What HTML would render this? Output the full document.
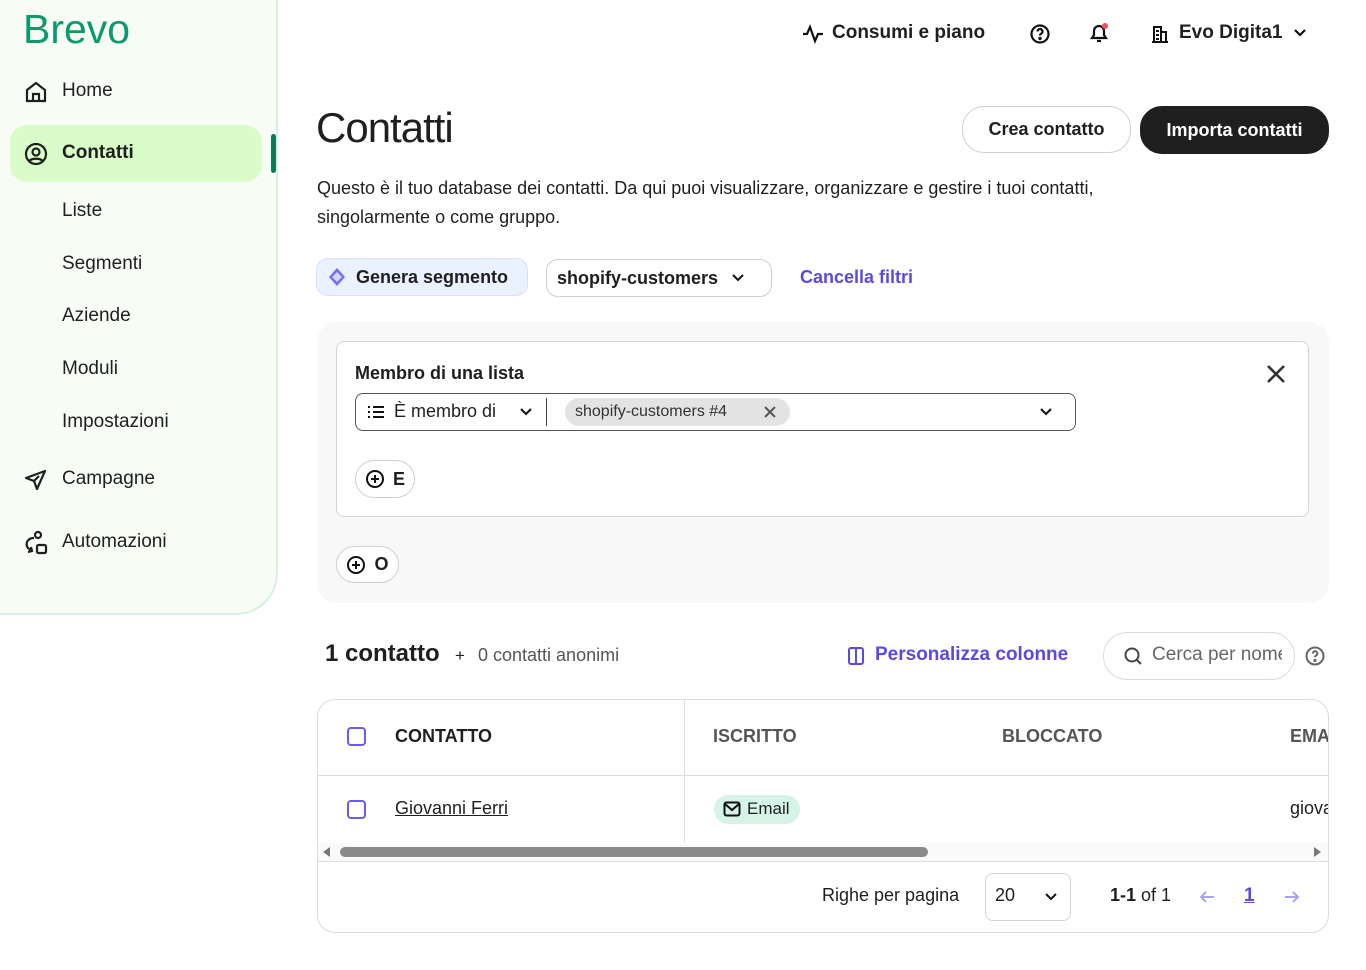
<!DOCTYPE html>
<html><head><meta charset="utf-8"><style>
*{box-sizing:border-box;margin:0;padding:0}
body{width:1366px;height:970px;background:#fff;font-family:"Liberation Sans",sans-serif;color:#1f1f1f;position:relative;overflow:hidden}
.a{position:absolute;white-space:nowrap}
.side{position:absolute;left:0;top:-2px;width:278px;height:617px;background:#f7fdf5;border-right:2px solid #d8efe6;border-bottom:2px solid #d8efe6;border-bottom-right-radius:42px}
.nav{font-size:19px;color:#1f1f1f}
svg{display:block}
.btn{position:absolute;border:1px solid #cfcfcf;border-radius:22px;background:#fff;display:flex;align-items:center;justify-content:center}
</style></head><body>
<div class="side"></div>
<div class="a" style="left:23px;top:6px;font-size:41px;color:#0b996e;letter-spacing:0">Brevo</div>
<svg class="a" style="left:24px;top:80px" width="24" height="24" viewBox="0 0 24 24" fill="none" stroke="#1f1f1f" stroke-width="2.2"><path d="M3 10L12 3l9 7v11H3z"/><path d="M9 21v-7h6v7"/></svg>
<div class="a nav" style="left:62px;top:80px">Home</div>
<div class="a" style="left:10px;top:125px;width:252px;height:57px;background:#d9fcc9;border-radius:17px"></div>
<div class="a" style="left:271px;top:134px;width:5px;height:39px;background:#0b7a57;border-radius:3px"></div>
<svg class="a" style="left:24px;top:142px" width="24" height="24" viewBox="0 0 24 24" fill="none" stroke="#1f1f1f" stroke-width="2.2"><circle cx="12" cy="12" r="10"/><circle cx="12" cy="10" r="3.5"/><path d="M5.5 19c2-3 11-3 13 0"/></svg>
<div class="a nav" style="left:62px;top:142px;font-weight:bold">Contatti</div>
<div class="a nav" style="left:62px;top:200px">Liste</div>
<div class="a nav" style="left:62px;top:253px">Segmenti</div>
<div class="a nav" style="left:62px;top:305px">Aziende</div>
<div class="a nav" style="left:62px;top:358px">Moduli</div>
<div class="a nav" style="left:62px;top:411px">Impostazioni</div>
<svg class="a" style="left:24px;top:468px" width="24" height="24" viewBox="0 0 24 24" fill="none" stroke="#1f1f1f" stroke-width="2.2" stroke-linejoin="round"><path d="M21 3L2 10l8 3 3 8z"/><path d="M10 13l5-5"/></svg>
<div class="a nav" style="left:62px;top:468px">Campagne</div>
<svg class="a" style="left:24px;top:530px" width="24" height="26" viewBox="0 0 24 26" fill="none" stroke="#1f1f1f" stroke-width="2.2"><circle cx="14" cy="5" r="3"/><rect x="13" y="15" width="9" height="8" rx="1.5"/><path d="M10 8C3 8 1 14 4 18l4 3M4 22l4-1-1-4"/></svg>
<div class="a nav" style="left:62px;top:531px">Automazioni</div>

<svg class="a" style="left:802px;top:24px" width="22" height="20" viewBox="0 0 22 20" fill="none" stroke="#111" stroke-width="2.2"><path d="M1 10h4l3-7 5 14 3-7h5"/></svg>
<div class="a" style="left:832px;top:22px;font-size:19px;font-weight:bold">Consumi e piano</div>
<svg class="a" style="left:1029px;top:23px" width="22" height="22" viewBox="0 0 22 22" fill="none" stroke="#111" stroke-width="2.2"><circle cx="11" cy="11" r="8.5"/><path d="M8.5 8.5a2.5 2.5 0 1 1 3.5 2.3c-.8.4-1 1-1 1.7"/><circle cx="11" cy="15.5" r=".6" fill="#111"/></svg>
<svg class="a" style="left:1087px;top:21px" width="24" height="24" viewBox="0 0 24 24" fill="none" stroke="#111" stroke-width="2.2"><path d="M5 17h14l-2-3V10a5 5 0 0 0-10 0v4z"/><path d="M10 20h4"/><circle cx="18" cy="5" r="3" fill="#f24a5a" stroke="none"/></svg>
<svg class="a" style="left:1150px;top:24px" width="20" height="20" viewBox="0 0 20 20" fill="none" stroke="#111" stroke-width="2"><path d="M2 18h16M4 18V3h7v15M11 8h5v10M6 7h3M6 11h3M6 15h3"/></svg>
<div class="a" style="left:1179px;top:22px;font-size:19px;font-weight:bold">Evo Digita1</div>
<svg class="a" style="left:1292px;top:26px" width="16" height="14" viewBox="0 0 16 14" fill="none" stroke="#111" stroke-width="2.2"><path d="M3 4l5 5 5-5"/></svg>

<div class="a" style="left:316px;top:104px;font-size:42px;letter-spacing:-1px">Contatti</div>
<div class="btn" style="left:962px;top:106px;width:169px;height:47px;font-size:18px;font-weight:bold">Crea contatto</div>
<div class="btn" style="left:1140px;top:106px;width:189px;height:48px;font-size:18px;font-weight:bold;background:#1f1f1f;color:#fff;border-color:#1f1f1f">Importa contatti</div>
<div class="a" style="left:317px;top:174px;font-size:18px;line-height:29px;white-space:normal;width:885px">Questo è il tuo database dei contatti. Da qui puoi visualizzare, organizzare e gestire i tuoi contatti, singolarmente o come gruppo.</div>

<div class="btn" style="left:316px;top:258px;width:212px;height:38px;border-radius:12px;background:#eaf1ff;border-color:#d5e1fb;justify-content:flex-start;padding-left:10px;font-size:18px;font-weight:bold"><svg width="20" height="20" viewBox="0 0 20 20"><path d="M10 1l8 9-8 9-8-9z" fill="#7a6cf0"/><path d="M10 5l5 5-5 5-5-5z" fill="#cfd6ff"/></svg><span style="margin-left:9px">Genera segmento</span></div>
<div class="btn" style="left:546px;top:259px;width:226px;height:38px;border-radius:12px;justify-content:flex-start;padding-left:10px;font-size:18px;font-weight:bold">shopify-customers<svg style="margin-left:13px" width="14" height="12" viewBox="0 0 14 12" fill="none" stroke="#111" stroke-width="2"><path d="M2 3l5 5 5-5"/></svg></div>
<div class="a" style="left:800px;top:267px;font-size:18px;font-weight:bold;color:#5b49e0">Cancella filtri</div>

<div class="a" style="left:317px;top:322px;width:1012px;height:281px;background:#f8f8f8;border-radius:20px"></div>
<div class="a" style="left:336px;top:341px;width:973px;height:176px;background:#fff;border:1px solid #d4d4d4;border-radius:8px"></div>
<div class="a" style="left:355px;top:363px;font-size:18px;font-weight:bold">Membro di una lista</div>
<svg class="a" style="left:1266px;top:364px" width="20" height="20" viewBox="0 0 20 20" stroke="#333" stroke-width="2.6"><path d="M2 2l16 16M18 2L2 18"/></svg>
<div class="a" style="left:355px;top:393px;width:721px;height:38px;border:1px solid #555;border-radius:8px"></div>
<svg class="a" style="left:367px;top:404px" width="18" height="16" viewBox="0 0 18 16" stroke="#111" stroke-width="2"><path d="M1 3h2M6 3h11M1 8h2M6 8h11M1 13h2M6 13h11"/></svg>
<div class="a" style="left:394px;top:401px;font-size:18px">È membro di</div>
<svg class="a" style="left:519px;top:406px" width="14" height="12" viewBox="0 0 14 12" fill="none" stroke="#111" stroke-width="2"><path d="M2 3l5 5 5-5"/></svg>
<div class="a" style="left:546px;top:398px;width:1px;height:28px;background:#444"></div>
<div class="a" style="left:565px;top:398px;width:225px;height:28px;background:#e3e3e3;border-radius:14px"></div>
<div class="a" style="left:575px;top:403px;font-size:16px;color:#333">shopify-customers #4</div>
<svg class="a" style="left:763px;top:405px" width="14" height="14" viewBox="0 0 14 14" stroke="#555" stroke-width="2"><path d="M2 2l10 10M12 2L2 12"/></svg>
<svg class="a" style="left:1039px;top:406px" width="14" height="12" viewBox="0 0 14 12" fill="none" stroke="#111" stroke-width="2"><path d="M2 3l5 5 5-5"/></svg>
<div class="btn" style="left:355px;top:460px;width:60px;height:38px;border-radius:19px;font-size:18px;font-weight:bold"><svg width="20" height="20" viewBox="0 0 20 20" fill="none" stroke="#111" stroke-width="2"><circle cx="10" cy="10" r="8"/><path d="M10 6v8M6 10h8"/></svg><span style="margin-left:8px">E</span></div>
<div class="btn" style="left:336px;top:546px;width:63px;height:37px;border-radius:19px;font-size:18px;font-weight:bold"><svg width="20" height="20" viewBox="0 0 20 20" fill="none" stroke="#111" stroke-width="2"><circle cx="10" cy="10" r="8"/><path d="M10 6v8M6 10h8"/></svg><span style="margin-left:8px">O</span></div>

<div class="a" style="left:325px;top:640px;font-size:24px;font-weight:bold">1 contatto</div>
<div class="a" style="left:455px;top:646px;font-size:17px">+</div>
<div class="a" style="left:478px;top:645px;font-size:18px;color:#555">0 contatti anonimi</div>
<svg class="a" style="left:847px;top:646px" width="18" height="20" viewBox="0 0 18 20" fill="none" stroke="#5b49e0" stroke-width="2"><rect x="2" y="2" width="14" height="16" rx="2"/><path d="M9 2v16"/></svg>
<div class="a" style="left:875px;top:644px;font-size:19px;font-weight:bold;color:#5b49e0">Personalizza colonne</div>
<div class="a" style="left:1103px;top:632px;width:192px;height:48px;border:1px solid #dcdcdc;border-radius:24px;overflow:hidden"></div>
<svg class="a" style="left:1123px;top:646px" width="20" height="20" viewBox="0 0 20 20" fill="none" stroke="#444" stroke-width="2"><circle cx="9" cy="9" r="6.5"/><path d="M14 14l4 4"/></svg>
<div class="a" style="left:1152px;top:644px;font-size:19px;color:#666;width:130px;overflow:hidden">Cerca per nome</div>
<svg class="a" style="left:1305px;top:645px" width="20" height="22" viewBox="0 0 20 22" fill="none" stroke="#666" stroke-width="2"><circle cx="10" cy="11" r="8.5"/><path d="M7.8 8.5a2.3 2.3 0 1 1 3.2 2.1c-.7.4-1 .9-1 1.6"/><circle cx="10" cy="15.5" r=".6" fill="#666"/></svg>

<div class="a" style="left:317px;top:699px;width:1012px;height:234px;border:1px solid #dcdcdc;border-radius:18px;overflow:hidden">
 <div class="a" style="left:366px;top:0;width:1px;height:143px;background:#dcdcdc"></div>
 <div class="a" style="left:0;top:75px;width:1012px;height:1px;background:#dcdcdc"></div>
 <div class="a" style="left:0;top:143px;width:1012px;height:18px;background:#fafafa"></div>
 <div class="a" style="left:22px;top:147px;width:588px;height:10px;background:#8a8a8a;border-radius:5px"></div>
 <div class="a" style="left:5px;top:147px;width:0;height:0;border-top:5px solid transparent;border-bottom:5px solid transparent;border-right:7px solid #777"></div>
 <div class="a" style="left:996px;top:147px;width:0;height:0;border-top:5px solid transparent;border-bottom:5px solid transparent;border-left:7px solid #777"></div>
 <div class="a" style="left:0;top:161px;width:1012px;height:1px;background:#dcdcdc"></div>
 <div class="a" style="left:29px;top:27px;width:19px;height:19px;border:2px solid #6b5cf0;border-radius:4px"></div>
 <div class="a" style="left:77px;top:26px;font-size:18px;font-weight:bold">CONTATTO</div>
 <div class="a" style="left:395px;top:26px;font-size:18px;font-weight:bold;color:#555">ISCRITTO</div>
 <div class="a" style="left:684px;top:26px;font-size:18px;font-weight:bold;color:#555">BLOCCATO</div>
 <div class="a" style="left:972px;top:26px;font-size:18px;font-weight:bold;color:#555">EMAIL</div>
 <div class="a" style="left:29px;top:100px;width:19px;height:19px;border:2px solid #6b5cf0;border-radius:4px"></div>
 <div class="a" style="left:77px;top:98px;font-size:18px;text-decoration:underline">Giovanni Ferri</div>
 <div class="a" style="left:396px;top:95px;width:86px;height:29px;background:#d6f3e7;border-radius:15px"></div>
 <svg class="a" style="left:405px;top:101px" width="18" height="16" viewBox="0 0 18 16" fill="none" stroke="#111" stroke-width="2"><rect x="1.5" y="1.5" width="15" height="13" rx="2"/><path d="M2 3l7 6 7-6"/></svg>
 <div class="a" style="left:429px;top:99px;font-size:17px">Email</div>
 <div class="a" style="left:972px;top:98px;font-size:18px">giovanni</div>
 <div class="a" style="left:504px;top:185px;font-size:18px">Righe per pagina</div>
 <div class="a" style="left:667px;top:173px;width:86px;height:48px;border:1px solid #d4d4d4;border-radius:8px"></div>
 <div class="a" style="left:677px;top:185px;font-size:18px">20</div>
 <svg class="a" style="left:726px;top:191px" width="14" height="12" viewBox="0 0 14 12" fill="none" stroke="#111" stroke-width="2"><path d="M2 3l5 5 5-5"/></svg>
 <div class="a" style="left:792px;top:185px;font-size:18px"><b>1-1</b> of 1</div>
 <svg class="a" style="left:880px;top:189px" width="18" height="16" viewBox="0 0 18 16" fill="none" stroke="#a9a3f5" stroke-width="2"><path d="M16 8H3M8 3L3 8l5 5"/></svg>
 <div class="a" style="left:926px;top:185px;font-size:19px;font-weight:bold;color:#5b49e0;text-decoration:underline">1</div>
 <svg class="a" style="left:965px;top:189px" width="18" height="16" viewBox="0 0 18 16" fill="none" stroke="#a9a3f5" stroke-width="2"><path d="M2 8h13M10 3l5 5-5 5"/></svg>
</div>
</body></html>
